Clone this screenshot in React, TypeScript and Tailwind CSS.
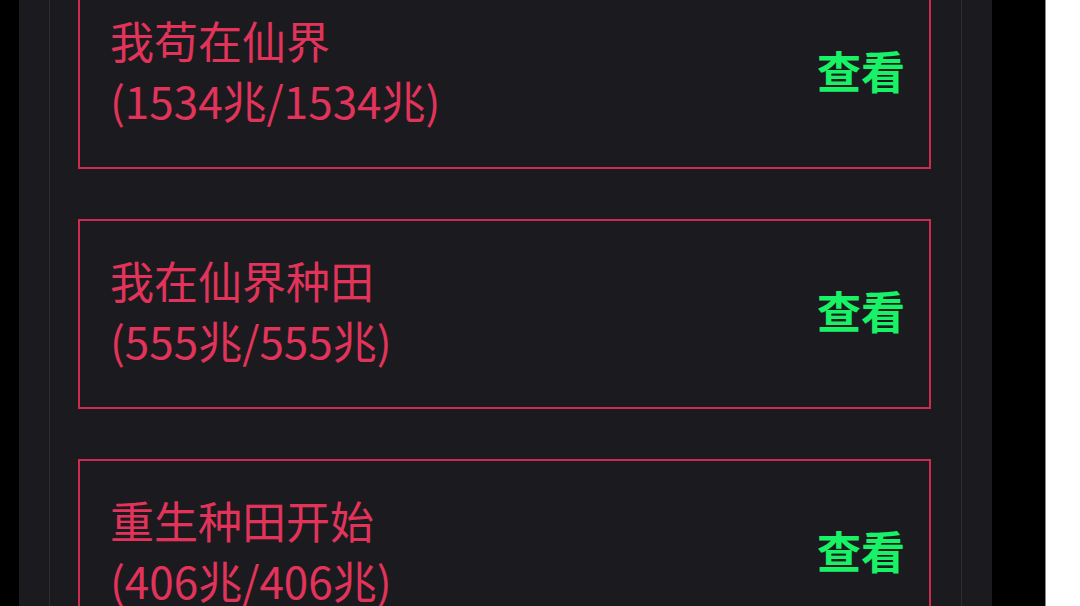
import React from "react";

const items = [
  { title: "我苟在仙界", size: "(1534兆/1534兆)" },
  { title: "我在仙界种田", size: "(555兆/555兆)" },
  { title: "重生种田开始", size: "(406兆/406兆)" },
];

export default function App() {
  return (
    <div
      className="flex h-[606px] w-[1080px] overflow-hidden bg-black"
      style={{ fontFamily: '"Noto Sans CJK SC", "Noto Sans", sans-serif' }}
    >
      <div className="w-[19px] shrink-0 bg-black" />
      <div className="flex w-[973px] shrink-0 bg-[#1b1b1f] px-[30px]">
        <div className="flex flex-1 flex-col border-x border-[#2d2d32] pl-[28px] pr-[30px]">
          <div className="mt-[-21px] flex flex-col gap-[50px]">
            {items.map((it) => (
              <div
                key={it.title}
                className="flex h-[190px] items-center justify-between border-2 border-[#cf2a50] pb-[8px] pl-[30px] pr-[24px]"
              >
                <div className="flex flex-col text-[44px] leading-[60px] text-[#e2335b]">
                  <span>{it.title}</span>
                  <span>{it.size}</span>
                </div>
                <span className="text-[44px] font-bold leading-[60px] text-[#17f267]">查看</span>
              </div>
            ))}
          </div>
        </div>
      </div>
      <div className="w-[53px] shrink-0 bg-black" />
      <div className="w-px shrink-0 bg-[#8a8a8a]" />
      <div className="flex-1 bg-white" />
    </div>
  );
}
